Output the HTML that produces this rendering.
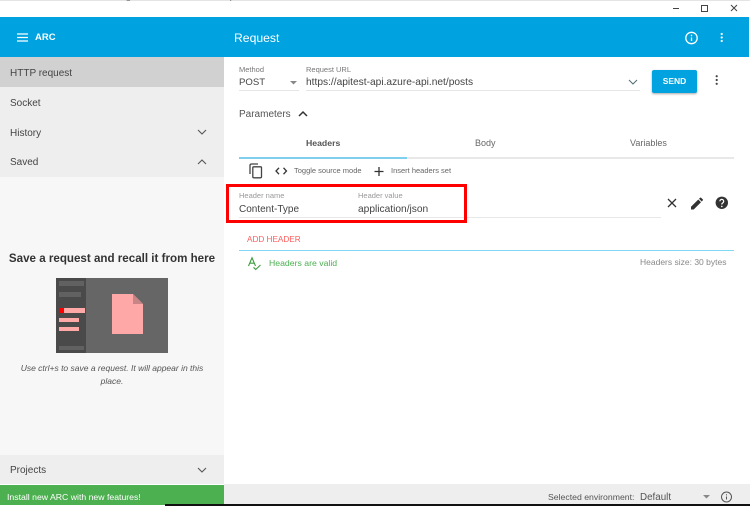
<!DOCTYPE html>
<html><head><meta charset="utf-8"><style>
html,body{margin:0;padding:0;background:#fff}
#p{position:relative;width:750px;height:506px;overflow:hidden;background:#fff;font-family:"Liberation Sans",sans-serif;color:#444}
.a{position:absolute;white-space:nowrap}
.b{position:absolute}
svg{position:absolute;overflow:visible}
</style></head><body><div id="p">
<div class="b" style="left:0;top:0;width:750px;height:1px;background:#e4e4e4"></div>
<div class="a" style="left:60px;top:-9px;font-size:10px;color:#777">Rest API testing and other tools for requests</div>
<svg style="left:0;top:0" width="750" height="17" fill="none" stroke="#444" stroke-width="1"><path d="M673 8.500h6"/><rect x="701.500" y="5.500" width="6" height="6"/><path d="M731 5l6 6M737 5l-6 6"/></svg>

<div class="b" style="left:0;top:17px;width:749px;height:40px;background:#00a2df"></div>
<svg style="left:17px;top:33px" width="12" height="9" stroke="#fff" stroke-width="1.200"><path d="M0 1h11M0 4.500h11M0 8h11"/></svg>
<div class="a" style="left:35px;top:31px;font-size:9.500px;font-weight:bold;color:#fff;line-height:13px">ARC</div>
<div class="a" style="left:234px;top:30.500px;font-size:12.200px;color:#fff;line-height:15px">Request</div>
<svg style="left:684px;top:31px" width="14" height="14" fill="none" stroke="#fff" stroke-width="1.300"><circle cx="7.500" cy="7" r="5.700"/><path d="M7.500 6.500v3.500M7.500 3.800v1.400"/></svg>
<svg style="left:720px;top:33px" width="4" height="10" fill="#fff"><circle cx="1.700" cy="1" r="1.100"/><circle cx="1.700" cy="4.500" r="1.100"/><circle cx="1.700" cy="8" r="1.100"/></svg>

<div class="b" style="left:0;top:57px;width:224px;height:120px;background:#eee"></div>
<div class="b" style="left:0;top:57px;width:224px;height:30px;background:#d1d1d1"></div>
<div class="a" style="left:10px;top:66px;font-size:10px;line-height:13px;color:#444;margin-top:.5px">HTTP request</div>
<div class="a" style="left:10px;top:96.500px;font-size:10px;line-height:13px;color:#444">Socket</div>
<div class="a" style="left:10px;top:126.500px;font-size:10px;line-height:13px;color:#444">History</div>
<div class="a" style="left:10px;top:155.500px;font-size:10px;line-height:13px;color:#444">Saved</div>
<svg style="left:197px;top:129px" width="10" height="6" fill="none" stroke="#555" stroke-width="1.100"><path d="M1 1l4 4 4-4"/></svg>
<svg style="left:197px;top:159px" width="10" height="6" fill="none" stroke="#555" stroke-width="1.100"><path d="M1 5l4-4 4 4"/></svg>

<div class="b" style="left:0;top:177px;width:224px;height:278px;background:#f7f7f7"></div>
<div class="a" style="left:0;width:224px;top:251px;text-align:center;font-size:11.600px;font-weight:bold;color:#333;line-height:15px">Save a request and recall it from here</div>
<div class="b" style="left:56px;top:278px;width:112px;height:75px;background:#666"></div>
<div class="b" style="left:56px;top:278px;width:30px;height:75px;background:#4a4a4a"></div>
<div class="b" style="left:59px;top:281px;width:25px;height:5px;background:#616161"></div>
<div class="b" style="left:59px;top:292px;width:22px;height:5px;background:#616161"></div>
<div class="b" style="left:59px;top:308px;width:26px;height:5px;background:#ffa8a8"></div>
<div class="b" style="left:59px;top:308px;width:5px;height:5px;background:#f00"></div>
<div class="b" style="left:59px;top:318px;width:20px;height:4px;background:#ffa8a8"></div>
<div class="b" style="left:59px;top:327px;width:20px;height:4px;background:#ffa8a8"></div>
<div class="b" style="left:59px;top:346px;width:25px;height:4px;background:#616161"></div>
<svg style="left:112px;top:294px" width="31" height="41"><path d="M0 0h21l10 10v30H0z" fill="#ffa8a8"/><path d="M21 0l10 10H21z" fill="#c98585"/></svg>
<div class="a" style="left:10px;width:204px;top:362px;white-space:normal;text-align:center;font-size:8.500px;font-style:italic;color:#555;line-height:13px">Use ctrl+s to save a request. It will appear in this place.</div>

<div class="b" style="left:0;top:455px;width:224px;height:29px;background:#eee"></div>
<div class="a" style="left:10px;top:464px;font-size:10px;line-height:13px;color:#444">Projects</div>
<svg style="left:197px;top:467px" width="10" height="6" fill="none" stroke="#555" stroke-width="1.100"><path d="M1 1l4 4 4-4"/></svg>
<div class="b" style="left:0;top:485px;width:224px;height:21px;background:#4caf50"></div>
<div class="a" style="left:7px;top:491px;font-size:8.700px;line-height:12px;color:#fff">Install new ARC with new features!</div>
<div class="b" style="left:224px;top:484px;width:526px;height:20px;background:#eee"></div>
<div class="b" style="left:0;top:505px;width:165px;height:1px;background:#fff"></div>
<div class="b" style="left:165px;top:504px;width:585px;height:2px;background:#111"></div>
<div class="a" style="left:548px;top:491px;font-size:8.700px;line-height:12px;color:#555">Selected environment:</div>
<div class="a" style="left:640px;top:490.500px;font-size:9.800px;line-height:13px;color:#555">Default</div>
<svg style="left:703px;top:495px" width="8" height="4" fill="#888"><path d="M0 0h7L3.500 3.500z"/></svg>
<svg style="left:720px;top:490px" width="14" height="14" fill="none" stroke="#555" stroke-width="1"><circle cx="6.500" cy="7" r="5"/><path d="M6.500 6.500v3M6.500 4.200v1.200"/></svg>

<div class="a" style="left:239px;top:65px;font-size:7.500px;line-height:10px;color:#777">Method</div>
<div class="a" style="left:239px;top:76px;font-size:9.600px;line-height:13px;color:#444">POST</div>
<svg style="left:290px;top:81px" width="8" height="4" fill="#888"><path d="M0 0h7L3.500 3.500z"/></svg>
<div class="b" style="left:239px;top:90px;width:60px;height:1px;background:#e6e6e6"></div>
<div class="a" style="left:306px;top:65px;font-size:7.500px;line-height:10px;color:#777">Request URL</div>
<div class="a" style="left:306px;top:76px;font-size:10.200px;line-height:13px;color:#444">https://apitest-api.azure-api.net/posts</div>
<svg style="left:628px;top:79px" width="10" height="6" fill="none" stroke="#54707c" stroke-width="1.100"><path d="M1 1l4 4 4-4"/></svg>
<div class="b" style="left:306px;top:90px;width:334px;height:1px;background:#e6e6e6"></div>
<div class="a" style="left:652px;top:70px;width:45px;height:23px;background:#00a2df;border-radius:2px;box-shadow:0 1px 2px rgba(0,0,0,.35);text-align:center;color:#fff;font-size:8.500px;font-weight:bold;line-height:22px">SEND</div>
<svg style="left:715px;top:75px" width="4" height="11" fill="#444"><circle cx="1.700" cy="1.200" r="1.100"/><circle cx="1.700" cy="5" r="1.100"/><circle cx="1.700" cy="8.800" r="1.100"/></svg>

<div class="a" style="left:239px;top:107.500px;font-size:10px;line-height:13px;color:#555">Parameters</div>
<svg style="left:298px;top:111px" width="10" height="6" fill="none" stroke="#333" stroke-width="1.500"><path d="M1 5l4-4 4 4"/></svg>
<div class="a" style="left:306px;top:137px;font-size:8.700px;line-height:12px;font-weight:bold;color:#555">Headers</div>
<div class="a" style="left:475px;top:137px;font-size:9px;line-height:12px;color:#666">Body</div>
<div class="a" style="left:630px;top:137px;font-size:9px;line-height:12px;color:#666">Variables</div>
<div class="b" style="left:239px;top:157px;width:495px;height:2px;background:#e8e8e8"></div>
<div class="b" style="left:239px;top:157px;width:168px;height:2px;background:#7fd0ee"></div>

<svg style="left:249px;top:163px" width="14" height="16" fill="none" stroke="#444" stroke-width="1.300"><path d="M1 11V2.500Q1 1 2.500 1H9"/><rect x="3.800" y="3.800" width="8.700" height="11" rx="1"/></svg>
<svg style="left:275px;top:167px" width="13" height="8" fill="none" stroke="#333" stroke-width="1.300"><path d="M4 .8L1 4l3 3.200M8.500.8L11.500 4l-3 3.200"/></svg>
<div class="a" style="left:294px;top:166px;font-size:7.500px;line-height:10px;color:#666">Toggle source mode</div>
<svg style="left:374px;top:167px" width="10" height="10" stroke="#333" stroke-width="1.300"><path d="M5 0v9M.500 4.500h9"/></svg>
<div class="a" style="left:391px;top:166px;font-size:7.500px;line-height:10px;color:#666">Insert headers set</div>

<div class="b" style="left:239px;top:217px;width:422px;height:1px;background:#e8e8e8"></div>
<div class="a" style="left:239px;top:191px;font-size:7.500px;line-height:10px;color:#999">Header name</div>
<div class="a" style="left:239px;top:202.500px;font-size:10px;line-height:13px;color:#444">Content-Type</div>
<div class="a" style="left:358px;top:191px;font-size:7.500px;line-height:10px;color:#999">Header value</div>
<div class="a" style="left:358px;top:202.500px;font-size:10.200px;line-height:13px;color:#444">application/json</div>
<div class="b" style="left:226px;top:184px;width:235px;height:33px;border:3px solid #f00"></div>
<svg style="left:667px;top:198px" width="10" height="10" fill="none" stroke="#333" stroke-width="1.300"><path d="M1 1l8 8M9 1l-8 8"/></svg>
<svg style="left:690.500px;top:197px" width="13" height="13" fill="#333"><path d="M0 9.800V12.500h2.700L10 5.200 7.300 2.500zM11.800 3.400a.7.700 0 000-1L10.100.7a.7.700 0 00-1 0L8 1.800 10.700 4.500z"/></svg>
<svg style="left:715px;top:196px" width="14" height="14"><circle cx="6.800" cy="6.800" r="6.200" fill="#333"/><path d="M4.900 5.300a1.900 1.900 0 113 1.500c-.7.500-1.100.8-1.100 1.700" fill="none" stroke="#fff" stroke-width="1.200"/><circle cx="6.800" cy="10.400" r=".8" fill="#fff"/></svg>

<div class="a" style="left:247px;top:234px;font-size:8.200px;line-height:12px;color:#ff5c5c">ADD HEADER</div>
<div class="b" style="left:239px;top:250px;width:495px;height:1px;background:#7fd8f5"></div>
<svg style="left:248px;top:257px" width="14" height="14" fill="none" stroke="#3d9c40" stroke-width="1.100"><path d="M.5 9L4 .8 7.500 9M1.800 6.200h4.400M5.500 10.300l2.200 2.200 4.800-4.500"/></svg>
<div class="a" style="left:269px;top:257px;font-size:8.700px;line-height:12px;color:#4caf50">Headers are valid</div>
<div class="a" style="left:640px;top:256px;font-size:8.500px;line-height:12px;color:#888">Headers size: 30 bytes</div>
</div></body></html>
